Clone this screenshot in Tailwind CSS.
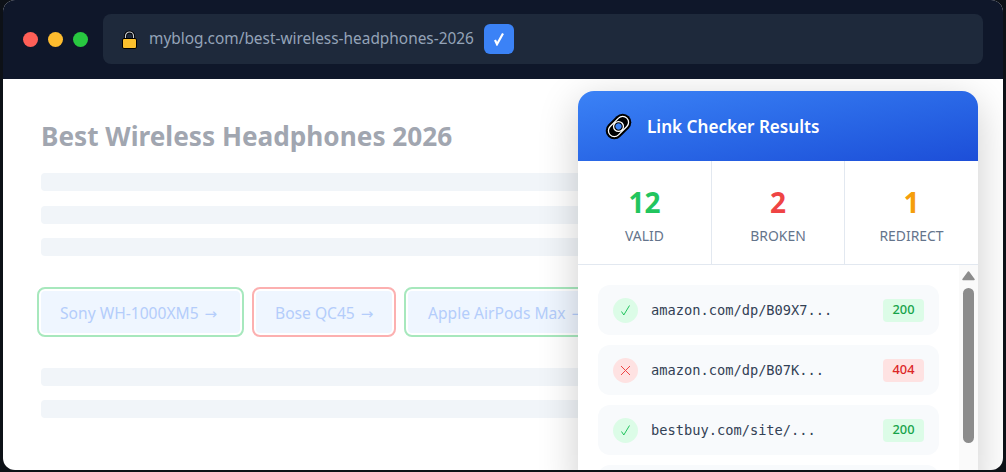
<!DOCTYPE html>
<html lang="en">
<head>
    <meta charset="UTF-8">
    <title>Link Checker</title>
    <script src="https://cdn.jsdelivr.net/npm/@tailwindcss/browser@4"></script>
</head>
<body class="bg-[#0d1117] w-[1006px] h-[472px] overflow-hidden font-['Noto_Sans',sans-serif]">
    <div class="ml-[3px] w-[1000px] h-[470px] rounded-xl overflow-hidden bg-white flex flex-col">
        <!-- browser bar -->
        <header class="h-[79px] shrink-0 bg-[#0f172a] flex items-center pl-5 pr-5 pb-px gap-[15px]">
            <div class="flex gap-[10px]">
                <span class="w-[15px] h-[15px] rounded-full bg-[#ff5f57]"></span>
                <span class="w-[15px] h-[15px] rounded-full bg-[#febc2e]"></span>
                <span class="w-[15px] h-[15px] rounded-full bg-[#28c840]"></span>
            </div>
            <div class="flex-1 h-[50px] bg-[#1e293b] rounded-lg flex items-center pl-[19px] gap-[13px]">
                <svg class="w-[15px] h-[19px]" viewBox="0 0 15 19">
                    <path d="M3.5 9V6a4 4 0 0 1 8 0v3" fill="none" stroke="#000" stroke-width="3"/>
                    <path d="M3.5 9V6a4 4 0 0 1 8 0v3" fill="none" stroke="#c8ccd4" stroke-width="1.2"/>
                    <rect x="0.5" y="8.5" width="14" height="10" rx="1.5" fill="#fbc02d" stroke="#000"/>
                </svg>
                <span class="-ml-px mr-[-3px] text-[15.4px] text-[#94a3b8] whitespace-nowrap">myblog.com/best-wireless-headphones-2026</span>
                <span class="w-[30px] h-[30px] rounded-md bg-[#3b82f6] flex items-center justify-center">
                    <svg class="w-[12px] h-[14px]" viewBox="0 0 12 14"><path d="M2 8 L4 12.2 L10 1.5" fill="none" stroke="#fff" stroke-width="2.2"/></svg>
                </span>
            </div>
        </header>

        <div class="relative flex-1 overflow-hidden">
            <!-- faded blog page -->
            <main class="pl-[38px] pt-[40px]">
                <h1 class="text-[26.2px] leading-[35px] font-bold text-[#a1a6b0] whitespace-nowrap">Best Wireless Headphones 2026</h1>
                <div class="mt-[19px] flex flex-col gap-[14.6px] w-[700px]">
                    <div class="h-[18px] rounded bg-[#f1f5f9]"></div>
                    <div class="h-[18px] rounded bg-[#f1f5f9]"></div>
                    <div class="h-[18px] rounded bg-[#f1f5f9]"></div>
                </div>
                <div class="mt-[31px] flex gap-[8px] -ml-[4px] whitespace-nowrap text-[15.6px] text-[#b4cdfb]">
                    <a class="w-[207px] h-[50px] pl-[21px] pt-1 flex items-center gap-[6px] rounded-lg bg-[#eff6ff] border-2 border-[#a7e8bd] shadow-[inset_0_0_0_2px_#fff]">Sony WH-1000XM5 <span class="font-['DejaVu_Sans',sans-serif] text-[15px]">→</span></a>
                    <a class="w-[144px] h-[50px] pl-[21px] pt-1 flex items-center gap-[6px] rounded-lg bg-[#eff6ff] border-2 border-[#fcb0b0] shadow-[inset_0_0_0_2px_#fff]">Bose QC45 <span class="font-['DejaVu_Sans',sans-serif] text-[15px]">→</span></a>
                    <a class="w-[196px] h-[50px] pl-[22px] pt-1 flex items-center gap-[6px] rounded-lg bg-[#eff6ff] border-2 border-[#a7e8bd] shadow-[inset_0_0_0_2px_#fff]">Apple AirPods Max <span class="font-['DejaVu_Sans',sans-serif] text-[15px]">→</span></a>
                </div>
                <div class="mt-[31px] flex flex-col gap-[14px] w-[700px]">
                    <div class="h-[18px] rounded bg-[#f1f5f9]"></div>
                    <div class="h-[18px] rounded bg-[#f1f5f9]"></div>
                </div>
            </main>

            <!-- link checker panel -->
            <aside class="absolute left-[575px] top-[12px] w-[400px] h-[400px] bg-white rounded-t-2xl shadow-[0_10px_40px_rgba(0,0,0,0.2)] overflow-hidden">
                <div class="h-[70px] bg-gradient-to-br from-[#3b82f6] to-[#1d4ed8] flex items-center pl-[26px] gap-[14px] text-white">
                    <svg class="w-[29px] h-[29px]" viewBox="0 0 27 27">
                        <g transform="rotate(-45 13.5 13.5)">
                            <rect x="0" y="5.5" width="27" height="16" rx="8" fill="#000"/>
                            <rect x="2.5" y="8" width="22" height="11" rx="5.5" fill="none" stroke="#fff" stroke-width="1.2"/>
                            <circle cx="13.5" cy="13.5" r="4.6" fill="#000" stroke="#fff" stroke-width="1.2"/>
                            <circle cx="13.5" cy="13.5" r="2.8" fill="#3b82f6"/>
                        </g>
                    </svg>
                    <span class="mt-[2px] text-[17.1px] font-semibold">Link Checker Results</span>
                </div>
                <div class="h-[104px] grid grid-cols-[134px_133px_133px] border-b border-[#e2e8f0] text-center">
                    <div class="pt-[21px] border-r border-[#e2e8f0]">
                        <div class="text-[28px] leading-[40px] font-bold text-[#22c55e]">12</div>
                        <div class="mt-[4px] text-[13.9px] text-[#64748b]">VALID</div>
                    </div>
                    <div class="pt-[21px] border-r border-[#e2e8f0]">
                        <div class="text-[28px] leading-[40px] font-bold text-[#ef4444]">2</div>
                        <div class="mt-[4px] text-[13.9px] text-[#64748b]">BROKEN</div>
                    </div>
                    <div class="pt-[21px]">
                        <div class="text-[28px] leading-[40px] font-bold text-[#f59e0b]">1</div>
                        <div class="mt-[4px] text-[13.9px] text-[#64748b]">REDIRECT</div>
                    </div>
                </div>
                <div class="relative flex">
                    <ul class="w-[381px] pl-[20px] pr-[20px] pt-[20px] flex flex-col gap-[10px]">
                        <li class="h-[50px] shrink-0 rounded-xl bg-[#f8fafc] flex items-center pl-[15px] pr-[15px]">
                            <span class="w-[25px] h-[25px] rounded-full bg-[#dcfce7] flex items-center justify-center">
                                <svg class="w-[11px] h-[11px]" viewBox="0 0 11 11"><path d="M1.5 6.5 L3.8 10 L9.5 0.5" fill="none" stroke="#22c55e" stroke-width="1"/></svg>
                            </span>
                            <span class="ml-[13px] flex-1 font-['DejaVu_Sans_Mono',monospace] text-[13.7px] text-[#334155]">amazon.com/dp/B09X7...</span>
                            <span class="w-[41px] h-[23px] rounded bg-[#dcfce7] text-[#16a34a] text-[12.8px] font-medium flex items-center justify-center">200</span>
                        </li>
                        <li class="h-[50px] shrink-0 rounded-xl bg-[#f8fafc] flex items-center pl-[15px] pr-[15px]">
                            <span class="w-[25px] h-[25px] rounded-full bg-[#fee2e2] flex items-center justify-center">
                                <svg class="w-[11px] h-[11px]" viewBox="0 0 11 11"><path d="M1 1 L10 10 M10 1 L1 10" fill="none" stroke="#ef4444" stroke-width="1"/></svg>
                            </span>
                            <span class="ml-[13px] flex-1 font-['DejaVu_Sans_Mono',monospace] text-[13.7px] text-[#334155]">amazon.com/dp/B07K...</span>
                            <span class="w-[41px] h-[23px] rounded bg-[#fee2e2] text-[#dc2626] text-[12.8px] font-medium flex items-center justify-center">404</span>
                        </li>
                        <li class="h-[50px] shrink-0 rounded-xl bg-[#f8fafc] flex items-center pl-[15px] pr-[15px]">
                            <span class="w-[25px] h-[25px] rounded-full bg-[#dcfce7] flex items-center justify-center">
                                <svg class="w-[11px] h-[11px]" viewBox="0 0 11 11"><path d="M1.5 6.5 L3.8 10 L9.5 0.5" fill="none" stroke="#22c55e" stroke-width="1"/></svg>
                            </span>
                            <span class="ml-[13px] flex-1 font-['DejaVu_Sans_Mono',monospace] text-[13.7px] text-[#334155]">bestbuy.com/site/...</span>
                            <span class="w-[41px] h-[23px] rounded bg-[#dcfce7] text-[#16a34a] text-[12.8px] font-medium flex items-center justify-center">200</span>
                        </li>
                        <li class="h-[50px] shrink-0 rounded-xl bg-[#f8fafc]"></li>
                    </ul>
                    <!-- scrollbar -->
                    <div class="w-[19px] h-[300px] bg-[#fafafa] relative">
                        <svg class="absolute left-[3px] top-[6px] w-[13px] h-[10px]" viewBox="0 0 13 10"><path d="M6.5 1 L12 8.5 H1 Z" fill="#8c8c8c" stroke="#8c8c8c" stroke-width="1.5" stroke-linejoin="round"/></svg>
                        <div class="absolute left-[4px] top-[23px] w-[11px] h-[155px] rounded-full bg-[#8c8c8c]"></div>
                    </div>
                </div>
            </aside>
        </div>
    </div>
</body>
</html>
